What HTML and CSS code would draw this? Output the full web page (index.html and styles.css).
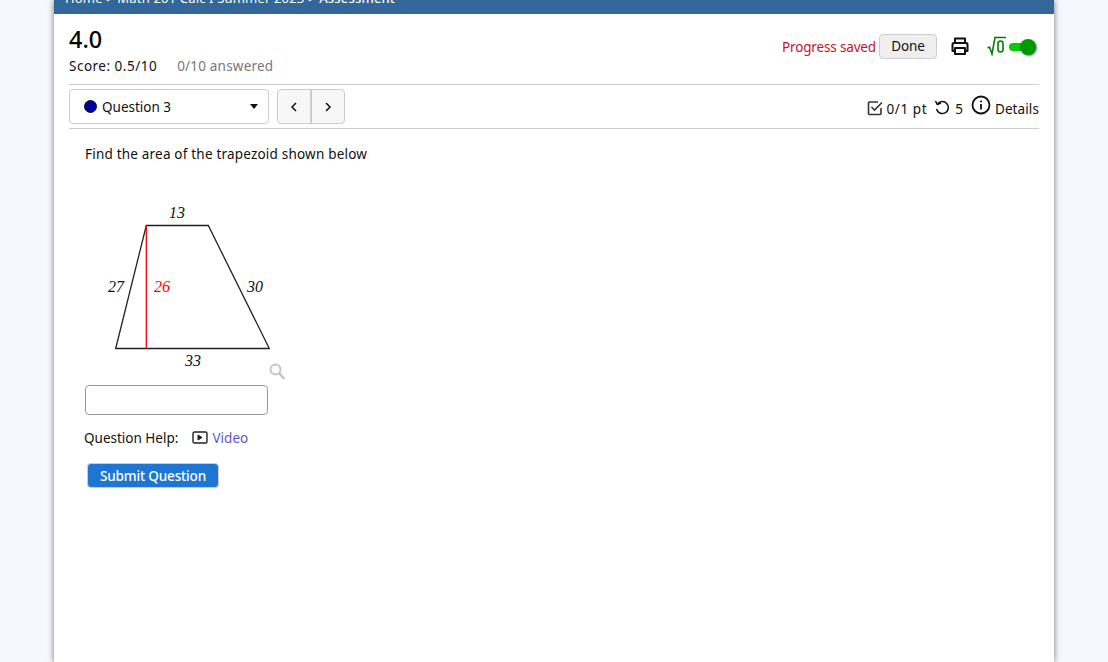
FILE: index.html
```html
<!DOCTYPE html>
<html lang="en">
<head>
<meta charset="utf-8">
<title>Assessment</title>
<link rel="stylesheet" href="styles.css">
</head>
<body>
<div class="page">
  <nav class="crumbs"><span>Home &gt; Math 201 Calc I Summer 2023 &gt; <b>Assessment</b></span></nav>
  <main class="content">
    <header class="top">
      <div class="titles">
        <h1>4.0</h1>
        <div class="score"><span>Score: 0.5/10</span><span class="answered">0/10 answered</span></div>
      </div>
      <div class="actions">
        <span class="saved">Progress saved</span>
        <button class="done" type="button">Done</button>
        <svg class="printer" viewBox="0 0 20 20" width="20" height="20" fill="none" stroke="#111" stroke-width="2" stroke-linejoin="round"><path d="M5 7V2.500h10V7"/><path d="M5 15H2.500V8.500a1.500 1.500 0 0 1 1.500-1.500h12a1.500 1.500 0 0 1 1.500 1.500V15H15"/><rect x="5" y="12" width="10" height="6"/></svg>
        <span class="mathtoggle">
          <svg viewBox="0 0 20 20" width="20" height="20" fill="none" stroke="#0a7a0a" stroke-width="1.600"><path d="M0.500 12l2-1 2.500 7L8 1.500h11"/><rect x="11" y="5" width="5" height="11" rx="2.500"/></svg>
          <span class="switch"><span class="knob"></span></span>
        </span>
      </div>
    </header>
    <div class="qbar">
      <div class="select"><span class="dot"></span><span class="qname">Question 3</span><span class="caret"></span></div>
      <div class="pager">
        <button type="button" aria-label="Previous"><svg viewBox="0 0 10 10" width="10" height="10" fill="none" stroke="#111" stroke-width="1.500"><path d="M7 1L3 5l4 4"/></svg></button>
        <button type="button" aria-label="Next"><svg viewBox="0 0 10 10" width="10" height="10" fill="none" stroke="#111" stroke-width="1.500"><path d="M3 1l4 4-4 4"/></svg></button>
      </div>
      <div class="meta">
        <svg class="check" viewBox="0 0 16 16" width="16" height="16" fill="none" stroke="#333" stroke-width="1.600"><path d="M14 8v5.500a1 1 0 0 1-1 1H2.500a1 1 0 0 1-1-1V3a1 1 0 0 1 1-1H11"/><path d="M4.500 7l3 3L15 2.500"/></svg>
        <span class="pts">0/1 pt</span>
        <svg class="undo" viewBox="0 0 16 16" width="16" height="16" fill="none" stroke="#111" stroke-width="1.500"><path d="M3.500 5A6 6 0 1 1 2.500 10"/><path d="M1.500 2l1.800 3.500L7 4"/></svg>
        <span class="tries">5</span>
        <svg class="info" viewBox="0 0 20 20" width="20" height="20" fill="none" stroke="#111" stroke-width="1.800"><circle cx="10" cy="10" r="8.500"/><path d="M10 9v5.500M10 5.500v1.800"/></svg>
        <span class="details">Details</span>
      </div>
    </div>
    <section class="question">
      <p class="prompt">Find the area of the trapezoid shown below</p>
      <svg class="figure" viewBox="0 0 220 199" width="220" height="199">
        <path d="M30.700 162.500L61.300 39.500H123.300L184.300 162.500Z" fill="none" stroke="#222" stroke-width="1.300"/>
        <path d="M61.300 39.500V162.500" fill="none" stroke="#f00" stroke-width="1.300"/>
        <g class="lbl">
          <text x="92" y="32">13</text>
          <text x="31" y="106">27</text>
          <text class="red" x="77" y="106">26</text>
          <text x="170" y="106">30</text>
          <text x="108" y="180">33</text>
        </g>
        <g fill="none" stroke="#c4c4c4" stroke-width="2"><circle cx="190.500" cy="183.500" r="5"/><path d="M194 187L199.300 192.800" stroke-width="2.500"/></g>
      </svg>
      <input class="answer" type="text" aria-label="Answer">
      <div class="help">
        <span>Question Help:</span>
        <svg viewBox="0 0 16 14" width="16" height="14" fill="none" stroke="#222" stroke-width="1.400"><rect x="1" y="1" width="14" height="11" rx="1.500"/><path d="M6 4v5l4-2.500z" fill="#222" stroke-width="1"/></svg>
        <a href="#">Video</a>
      </div>
      <button class="submit" type="button">Submit Question</button>
    </section>
  </main>
</div>
</body>
</html>
```
FILE: styles.css
```css
* { box-sizing: border-box; }
html, body { margin: 0; height: 100%; overflow: hidden; }
body {
  background: #f7f8ff;
  font-family: "Noto Sans", sans-serif;
  font-size: 13.5px;
  color: #111;
}
.page {
  width: 1000px;
  height: 662px;
  margin-left: 54px;
  background: #fff;
  box-shadow: 0 0 6px rgba(0,0,0,.55);
}
.crumbs {
  height: 14px;
  background: #336699;
  color: #fff;
  padding-left: 11px;
  overflow: hidden;
  display: flex;
  align-items: flex-end;
}
.crumbs span { font-size: 13px; line-height: 20px; margin-bottom: 6px; white-space: nowrap; letter-spacing: .17px; }
.crumbs b { font-weight: 500; }
.content { padding: 0 15px; }
.top { display: flex; justify-content: space-between; height: 71px; border-bottom: 1px solid #ccc; }
.titles h1 { margin: 10px 0 0; font-size: 23.400px; line-height: 30px; font-weight: 500; color: #000; }
.score { margin-top: 2px; line-height: 20px; display: flex; gap: 20px; letter-spacing: .5px; }
.answered { color: #777; letter-spacing: .2px; }
.actions { display: flex; align-items: center; height: 46px; margin-top: 9px; }
.saved { color: #c8102e; letter-spacing: -.15px; margin-top: 2px; }
.done {
  margin-left: 3px; width: 58px; height: 25px; padding: 0;
  border: 1px solid #ccc; border-radius: 4px; background: #efefef;
  font: inherit; color: #111; letter-spacing: -.1px;
}
.printer { margin-left: 13px; }
.mathtoggle { display: flex; align-items: center; margin-left: 17px; margin-right: 2px; }
.switch { position: relative; width: 22px; height: 8px; margin-left: 2px; margin-right: 6px; margin-top: 2px; border-radius: 4px; background: #0c0; }
.knob { position: absolute; right: -5px; top: -4px; width: 16px; height: 16px; border-radius: 50%; background: #090; box-shadow: 1px 1px 2px rgba(0,0,0,.5); }
.qbar { display: flex; align-items: center; height: 44px; border-bottom: 1px solid #ccc; }
.select {
  width: 200px; height: 35px; border: 1px solid #ccc; border-radius: 4px;
  display: flex; align-items: center; padding: 0 10px 0 14px;
}
.dot { width: 13px; height: 13px; border-radius: 50%; background: #0000a0; border: 1px solid #111; }
.qname { margin-left: 5px; flex: 1; }
.caret { width: 0; height: 0; border: 4px solid transparent; border-top: 5px solid #111; border-bottom: 0; }
.pager { display: flex; margin-left: 8px; height: 35px; border: 1px solid #ccc; border-radius: 4px; background: #f7f7f7; }
.pager button { padding: 0; border: 0; background: none; display: flex; align-items: center; justify-content: center; }
.pager button:first-child { width: 32px; }
.pager button + button { width: 34px; border-left: 2px solid #ccc; }
.meta { margin-left: auto; display: flex; align-items: center; }
.meta span { position: relative; top: 2px; }
.check { margin-top: 2px; }
.pts { margin-left: 3px; letter-spacing: .6px; }
.undo { margin-left: 7px; margin-right: 1px; }
.tries { margin-left: 4px; }
.info { margin-left: 8px; margin-top: -4px; }
.details { margin-left: 4px; letter-spacing: .1px; }
.question { padding: 15px; padding-left: 16px; }
.prompt { margin: 0; line-height: 20px; letter-spacing: .2px; }
.figure { display: block; margin-top: 22px; }
.lbl text { font-family: "Liberation Serif", serif; font-style: italic; font-size: 16px; fill: #111; text-anchor: middle; }
.lbl .red { fill: #f00; }
.answer { display: block; width: 183px; height: 30px; border: 1px solid #999; border-radius: 4px; background: #fff; }
.help { display: flex; align-items: center; margin-top: 13px; margin-left: -1px; line-height: 20px; }
.help svg { margin-left: 14px; margin-right: 4px; }
.help a { color: #5b5bc0; text-decoration: none; letter-spacing: .05px; }
.submit {
  display: block; margin-top: 15px; margin-left: 2px;
  width: 132px; height: 25px; padding: 0;
  background: #1e76d2; color: #fff; border: 1px solid #ccc; border-radius: 4px;
  font: inherit; font-weight: 500; letter-spacing: -.15px;
}
```
